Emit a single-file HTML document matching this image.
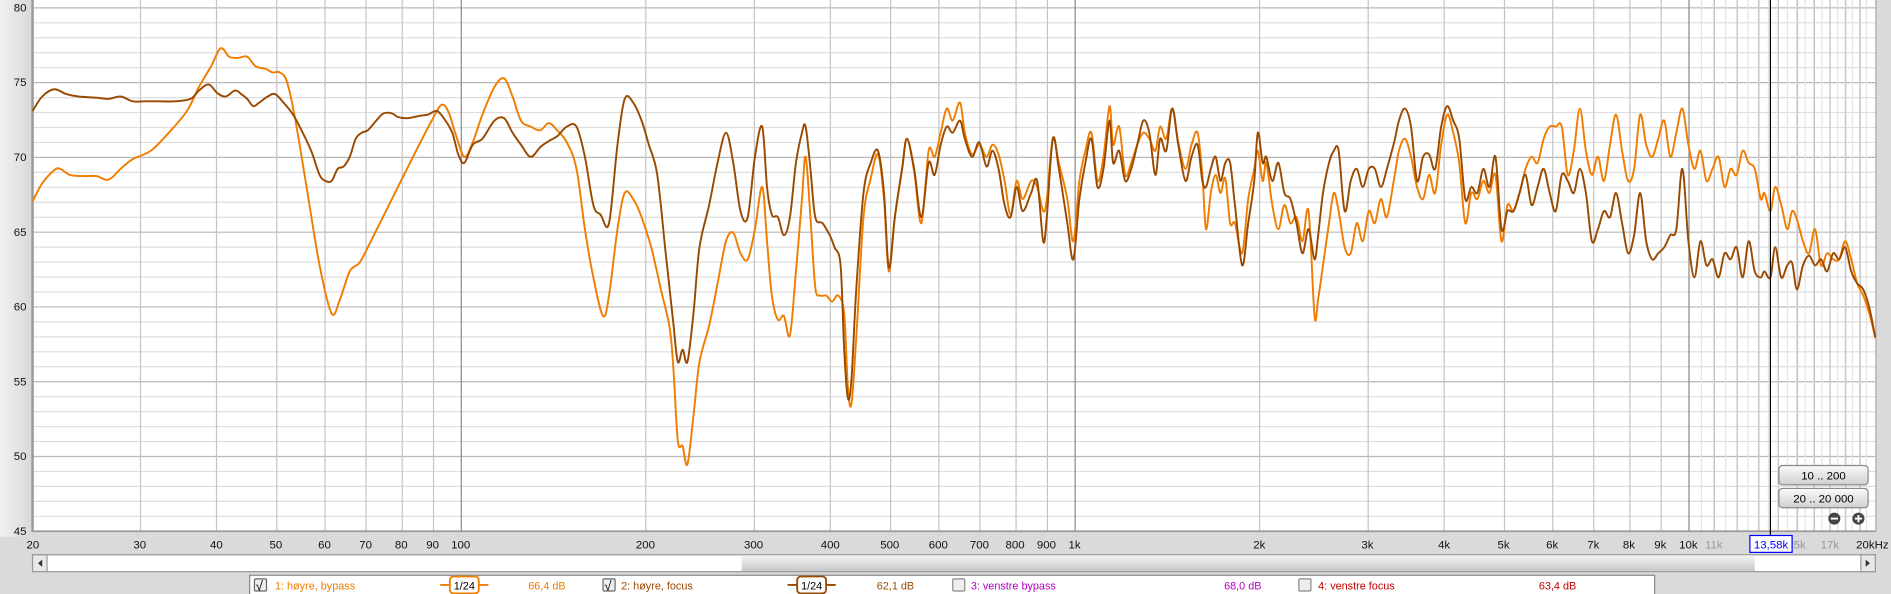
<!DOCTYPE html>
<html><head><meta charset="utf-8"><style>
html,body{margin:0;padding:0;width:1891px;height:594px;overflow:hidden;background:#dadada}
svg{display:block}
text{font-family:"Liberation Sans",sans-serif}
</style></head><body>
<svg id="s" width="1891" height="594" viewBox="0 0 1568 492.5" xmlns="http://www.w3.org/2000/svg">
<defs>
<linearGradient id="lg" x1="0" x2="1"><stop offset="0" stop-color="#f2f2f2"/><stop offset="1" stop-color="#d8d8d8"/></linearGradient>
<linearGradient id="bt" x1="0" x2="0" y1="0" y2="1"><stop offset="0" stop-color="#fafafa"/><stop offset="1" stop-color="#d0d0d0"/></linearGradient>
<linearGradient id="th" x1="0" x2="0" y1="0" y2="1"><stop offset="0" stop-color="#f4f4f4"/><stop offset="1" stop-color="#c8c8c8"/></linearGradient>
</defs>
<rect x="0" y="0" width="1568" height="493" fill="#dadada"/>
<rect x="0" y="0" width="27" height="445" fill="url(#lg)"/>
<rect x="27" y="0" width="1528" height="440" fill="#fff"/>
<g id="grid"></g>
<line x1="27" y1="0" x2="27" y2="441" stroke="#999" stroke-width="2"/>
<line x1="27" y1="440.5" x2="1555" y2="440.5" stroke="#999" stroke-width="1.5"/>
<line x1="1555.5" y1="0" x2="1555.5" y2="441" stroke="#aaa" stroke-width="1"/>
<g id="lab" font-size="9.5" fill="#111"></g>
<path id="o" fill="none" stroke="#f07d00" stroke-width="1.6" stroke-linejoin="round"/>
<path id="b" fill="none" stroke="#9a4a00" stroke-width="1.6" stroke-linejoin="round"/>
<line x1="1468" y1="0" x2="1468" y2="444" stroke="#000" stroke-width="1"/>
<rect x="1451" y="444" width="35" height="14" fill="#fff" stroke="#0000ff" stroke-width="1"/>
<text x="1468.5" y="455" font-size="9.5" fill="#0000ff" text-anchor="middle">13,58k</text>
<rect x="1475" y="386" width="74" height="16" rx="3" fill="url(#bt)" stroke="#888"/>
<text x="1512" y="397.5" font-size="9.5" text-anchor="middle">10 .. 200</text>
<rect x="1475" y="405" width="74" height="16" rx="3" fill="url(#bt)" stroke="#888"/>
<text x="1512" y="416.5" font-size="9.5" text-anchor="middle">20 .. 20 000</text>
<circle cx="1521" cy="430" r="5" fill="#444"/><rect x="1518" y="429.2" width="6" height="1.6" fill="#fff"/>
<circle cx="1541" cy="430" r="5" fill="#444"/><rect x="1538" y="429.2" width="6" height="1.6" fill="#fff"/><rect x="1540.2" y="427" width="1.6" height="6" fill="#fff"/>
<rect x="27" y="460" width="1528" height="14" fill="#fff" stroke="#999"/>
<rect x="615" y="460.5" width="840" height="13" fill="url(#th)"/>
<rect x="27" y="460" width="12" height="14" fill="#e8e8e8" stroke="#999"/>
<path d="M35 464 L31.5 467 L35 470Z" fill="#333"/>
<rect x="1543" y="460" width="12" height="14" fill="#e8e8e8" stroke="#999"/>
<path d="M1547 464 L1550.5 467 L1547 470Z" fill="#333"/>
<rect x="207" y="477" width="1165" height="20" fill="#fff" stroke="#888"/>
<g font-size="9">
<rect x="211" y="480" width="10" height="10" rx="1" fill="#eee" stroke="#666"/><text x="212" y="489.5" font-size="11">√</text>
<text x="228" y="489" fill="#f07d00">1: høyre, bypass</text>
<line x1="365" y1="485" x2="405" y2="485" stroke="#f07d00" stroke-width="1.5"/>
<rect x="373" y="478" width="24" height="14" rx="3" fill="#fff" stroke="#f07d00" stroke-width="1.5"/>
<text x="385" y="489" text-anchor="middle" fill="#000">1/24</text>
<text x="438" y="489" fill="#f07d00">66,4 dB</text>
<rect x="500" y="480" width="10" height="10" rx="1" fill="#eee" stroke="#666"/><text x="501" y="489.5" font-size="11">√</text>
<text x="515" y="489" fill="#9a4a00">2: høyre, focus</text>
<line x1="653" y1="485" x2="693" y2="485" stroke="#9a4a00" stroke-width="1.5"/>
<rect x="661" y="478" width="24" height="14" rx="3" fill="#fff" stroke="#9a4a00" stroke-width="1.5"/>
<text x="673" y="489" text-anchor="middle" fill="#000">1/24</text>
<text x="727" y="489" fill="#9a4a00">62,1 dB</text>
<rect x="790" y="480" width="10" height="10" rx="1" fill="#eee" stroke="#888"/>
<text x="805" y="489" fill="#b000c0">3: venstre bypass</text>
<text x="1015" y="489" fill="#b000c0">68,0 dB</text>
<rect x="1077" y="480" width="10" height="10" rx="1" fill="#eee" stroke="#888"/>
<text x="1093" y="489" fill="#c00000">4: venstre focus</text>
<text x="1276" y="489" fill="#c00000">63,4 dB</text>
</g>
</svg>
<script>
var NS="http://www.w3.org/2000/svg";
function X(f){return 382+509*Math.log10(f/100);}
function Y(d){return 6+(80-d)*12.4;}
var g=document.getElementById('grid'),lab=document.getElementById('lab');
function ln(x1,y1,x2,y2,c,w){var l=document.createElementNS(NS,'line');l.setAttribute('x1',x1);l.setAttribute('y1',y1);l.setAttribute('x2',x2);l.setAttribute('y2',y2);l.setAttribute('stroke',c);l.setAttribute('stroke-width',w||1);g.appendChild(l);}
function tx(x,y,s,a,c){var t=document.createElementNS(NS,'text');t.setAttribute('x',x);t.setAttribute('y',y);t.setAttribute('text-anchor',a||'middle');if(c)t.setAttribute('fill',c);t.textContent=s;lab.appendChild(t);}
for(var d=45;d<=80;d++){var y=Y(d)+0.5;ln(27,y,1555,y,d%5==0?'#b8b8b8':'#dedede',1);if(d%5==0)tx(22,Y(d)+3.5,d,'end');}
for(var f=10500;f<20000;f+=500){ln(X(f),0,X(f),440,'#e4e4e4',1);}
var fs=[20,30,40,50,60,70,80,90,100,200,300,400,500,600,700,800,900,1000,2000,3000,4000,5000,6000,7000,8000,9000,10000,11000,12000,13000,14000,15000,16000,17000,18000,19000];
fs.forEach(function(f){var dec=(f==100||f==1000||f==10000);var x=Math.round(X(f))+0.5;ln(x,0,x,440,dec?'#888':'#c4c4c4',1);});
var labs=[[20,'20'],[30,'30'],[40,'40'],[50,'50'],[60,'60'],[70,'70'],[80,'80'],[90,'90'],[100,'100'],[200,'200'],[300,'300'],[400,'400'],[500,'500'],[600,'600'],[700,'700'],[800,'800'],[900,'900'],[1000,'1k'],[2000,'2k'],[3000,'3k'],[4000,'4k'],[5000,'5k'],[6000,'6k'],[7000,'7k'],[8000,'8k'],[9000,'9k'],[10000,'10k'],[11000,'11k','#999'],[15000,'15k','#999'],[17000,'17k','#999']];
labs.forEach(function(a){tx(X(a[0])+(a[0]==20?1:0),455,a[1],'middle',a[2]);});
tx(1566,455,'20kHz','end');
var o=[27,167,35,152,45,141,50,140,58,145,70,146,80,146,90,149,100,140,110,132,125,125,140,110,155,92,165,72,175,55,183,40,190,47,197,48,205,47,212,55,220,57,226,60,232,60,238,68,245,100,255,160,265,220,275,260,282,248,290,225,298,218,305,205,315,185,330,155,345,125,358,100,366,87,372,93,378,112,385,130,392,118,400,95,410,72,418,65,425,80,432,100,440,105,448,108,455,102,462,108,470,118,478,140,485,190,492,230,500,262,505,245,512,190,518,160,525,165,532,180,540,205,548,240,555,270,558,300,562,365,566,370,570,385,575,345,580,300,588,270,595,235,602,200,608,193,614,210,620,215,626,190,632,155,636,200,640,245,645,265,650,262,655,278,660,225,665,165,668,130,672,180,676,238,680,245,685,245,690,250,695,245,700,260,703,320,706,335,710,280,716,180,722,148,728,128,733,165,737,225,742,180,748,140,752,115,758,142,764,185,770,125,775,130,780,110,785,90,790,100,796,85,800,110,806,128,812,120,818,130,823,120,828,128,833,150,838,178,843,150,848,165,855,150,860,155,865,175,868,165,873,115,878,135,885,165,890,200,895,150,900,125,905,110,910,150,915,130,920,88,923,120,928,105,933,145,938,135,943,120,948,110,953,115,958,125,962,105,967,115,972,90,977,118,983,140,988,120,993,110,997,145,1000,190,1004,160,1008,145,1012,160,1016,148,1020,185,1024,185,1030,210,1035,165,1040,140,1043,125,1047,150,1050,135,1055,170,1060,190,1065,170,1070,185,1075,180,1080,200,1085,175,1090,262,1093,248,1097,220,1102,185,1106,160,1110,175,1115,205,1120,210,1125,185,1130,200,1135,175,1140,185,1145,165,1150,180,1156,148,1160,125,1165,115,1170,130,1175,155,1180,165,1185,145,1190,160,1195,120,1200,95,1205,110,1210,135,1215,185,1220,160,1225,165,1230,150,1235,160,1240,145,1245,200,1250,170,1255,175,1260,160,1265,140,1270,130,1275,135,1280,115,1285,105,1290,105,1295,105,1300,145,1305,125,1310,90,1315,125,1320,145,1325,130,1330,150,1335,120,1340,95,1345,125,1350,150,1355,140,1360,95,1365,120,1370,130,1375,115,1380,100,1385,130,1390,110,1395,90,1400,120,1405,140,1410,125,1415,150,1420,140,1425,130,1430,155,1435,140,1440,145,1445,125,1450,135,1455,140,1460,165,1463,160,1468,175,1472,155,1477,170,1482,190,1486,175,1490,182,1495,200,1500,210,1505,190,1510,220,1515,210,1520,215,1525,215,1530,200,1535,215,1540,235,1545,245,1550,260,1555,280];
var b=[27,92,35,80,45,74,55,78,65,80,80,81,90,82,100,80,110,84,120,84,130,84,145,84,158,82,165,75,173,70,180,77,187,80,195,75,200,78,205,82,210,88,215,85,222,80,228,78,235,85,243,95,250,108,258,125,265,145,270,150,275,150,280,140,285,138,290,130,295,115,300,110,305,108,312,100,318,94,325,94,330,97,338,98,348,96,355,95,362,92,368,98,375,110,380,128,385,135,392,120,400,115,410,100,418,98,425,110,432,120,440,130,448,122,455,117,462,113,470,105,478,105,485,130,492,170,498,178,505,185,512,120,518,82,525,85,532,100,538,120,545,145,552,210,558,265,562,300,566,290,570,300,575,260,580,205,588,170,595,135,602,110,608,135,614,175,620,180,626,130,632,105,636,155,640,178,645,180,650,195,655,180,660,135,665,110,668,105,672,140,676,180,682,185,688,195,692,205,697,220,700,290,703,330,706,315,710,240,716,160,722,135,728,125,733,160,737,222,742,180,748,140,752,115,758,140,764,180,770,135,775,145,780,120,785,105,790,110,796,100,800,115,806,130,812,118,818,138,823,125,828,140,833,170,838,180,843,155,848,175,855,160,860,150,865,200,868,180,873,115,878,140,885,185,890,215,895,165,900,135,905,115,910,155,915,140,920,100,923,135,928,125,933,150,938,140,943,120,948,100,953,110,958,145,962,115,967,125,972,90,977,120,983,150,988,130,993,120,997,150,1000,155,1004,140,1008,130,1012,150,1016,135,1020,135,1024,170,1030,220,1035,185,1040,150,1043,110,1047,135,1050,130,1055,150,1060,135,1065,160,1070,165,1075,185,1080,210,1085,190,1090,215,1093,195,1097,160,1102,135,1106,125,1110,125,1115,175,1120,150,1125,140,1130,155,1135,140,1140,140,1145,155,1150,140,1156,118,1160,100,1165,90,1170,105,1175,150,1180,130,1185,128,1190,140,1195,105,1200,88,1205,100,1210,115,1215,165,1220,155,1225,160,1230,140,1235,155,1240,130,1245,190,1250,175,1255,175,1260,160,1265,145,1270,170,1275,155,1280,140,1285,160,1290,175,1295,145,1300,150,1305,160,1310,140,1315,160,1320,200,1325,190,1330,175,1335,180,1340,160,1345,185,1350,210,1355,195,1360,160,1365,200,1370,215,1375,210,1380,205,1385,195,1390,190,1395,140,1400,200,1405,230,1410,200,1415,220,1420,215,1425,230,1430,210,1435,215,1440,205,1445,230,1450,200,1455,225,1460,230,1463,225,1468,230,1472,205,1477,230,1482,220,1486,218,1490,240,1495,220,1500,212,1505,220,1510,215,1515,225,1520,210,1525,215,1530,205,1535,225,1540,235,1545,240,1550,255,1555,280];
function smooth(a){var P=[];for(var i=0;i<a.length;i+=2)P.push([a[i],a[i+1]]);var d='M'+P[0][0]+' '+P[0][1];
for(var i=0;i<P.length-1;i++){var p0=P[i-1]||P[i],p1=P[i],p2=P[i+1],p3=P[i+2]||p2;
var c1x=p1[0]+(p2[0]-p0[0])/6,c1y=p1[1]+(p2[1]-p0[1])/6,c2x=p2[0]-(p3[0]-p1[0])/6,c2y=p2[1]-(p3[1]-p1[1])/6;
d+=' C'+c1x.toFixed(1)+' '+c1y.toFixed(1)+' '+c2x.toFixed(1)+' '+c2y.toFixed(1)+' '+p2[0]+' '+p2[1];}return d;}
document.getElementById('o').setAttribute('d',smooth(o));
document.getElementById('b').setAttribute('d',smooth(b));
</script>
</body></html>
